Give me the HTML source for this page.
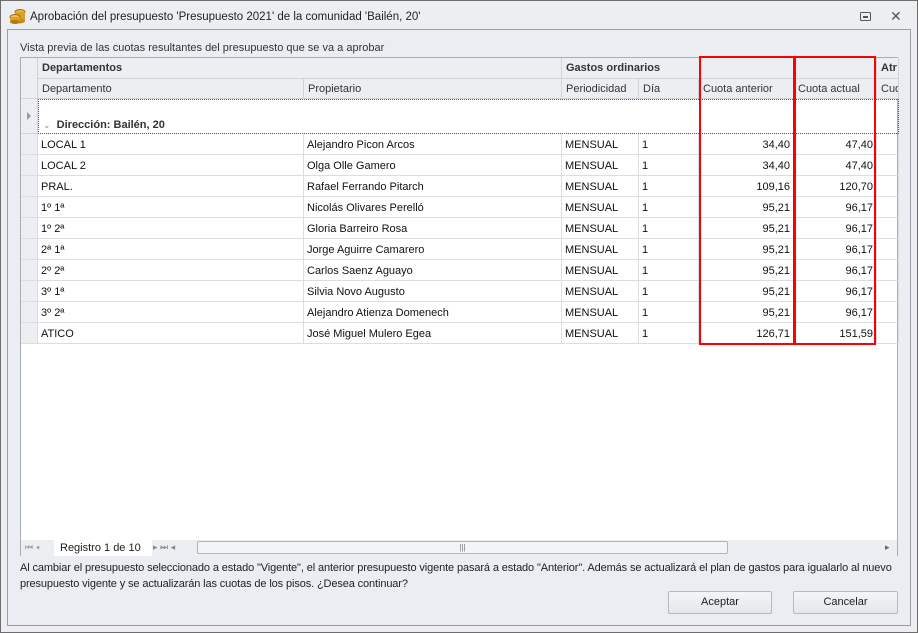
<!DOCTYPE html>
<html><head><style>
*{box-sizing:border-box;margin:0;padding:0}
body{width:918px;height:633px;background:#eceef2;font-family:"Liberation Sans",sans-serif;font-size:11px;color:#1e1e1e;position:relative;overflow:hidden}
.win{position:absolute;left:0;top:0;width:918px;height:633px;border:1px solid #6d6d6d}
.abs{position:absolute}
.panel{position:absolute;left:7px;top:29px;width:904px;height:597px;border:1px solid #9a9da3;background:#eaedf1}
.grid{position:absolute;left:20px;top:57px;width:878px;height:499px;background:#fff;border:1px solid #a9adb3}
.h{position:absolute;background:#eceef1;border-right:1px solid #d0d3d8;border-bottom:1px solid #d0d3d8;padding:4px 4px;white-space:nowrap;overflow:hidden;color:#333}
.c{position:absolute;border-right:1px solid #dcdde0;border-bottom:1px solid #dcdde0;padding:5px 3px 3px;white-space:nowrap;overflow:hidden;height:21px;color:#111}
.r{text-align:right}
.red{position:absolute;border:2px solid #f00}
.btn{position:absolute;top:591px;height:23px;border:1px solid #b6b9be;background:linear-gradient(#f4f5f7,#e4e6ea);text-align:center;line-height:21px;border-radius:2px}
</style></head><body>
<div class="win"></div>
<svg class="abs" style="left:9px;top:8px" width="18" height="16"><ellipse cx="11" cy="4" rx="5" ry="2.5" fill="#e9b53a" stroke="#9a6a10"/><rect x="6" y="4" width="10" height="9" fill="#d9a12b"/><ellipse cx="11" cy="13" rx="5" ry="2.5" fill="#c58c1a"/><ellipse cx="6" cy="9" rx="5" ry="2.5" fill="#f0c24a" stroke="#9a6a10"/><rect x="1" y="9" width="10" height="5" fill="#d9a12b"/><ellipse cx="6" cy="14" rx="5" ry="2" fill="#b07a12"/></svg>
<div class="abs" style="left:30px;top:11px;font-size:11.5px;color:#222">Aprobación del presupuesto 'Presupuesto 2021' de la comunidad 'Bailén, 20'</div>
<svg class="abs" style="left:860px;top:12px" width="12" height="10"><rect x="0.5" y="0.5" width="10" height="8" fill="none" stroke="#555" rx="1"/><rect x="3" y="4" width="5" height="2" fill="#555"/></svg>
<div class="abs" style="left:890px;top:8px;font-size:14px;color:#555">✕</div>
<div class="panel"></div>
<div class="abs" style="left:20px;top:42px;color:#333">Vista previa de las cuotas resultantes del presupuesto que se va a aprobar</div>
<div class="grid">
<div class="h" style="left:0;top:0;width:17px;height:41px"></div>
<div class="h" style="left:17px;top:0;width:524px;height:21px;font-weight:bold">Departamentos</div>
<div class="h" style="left:541px;top:0;width:315px;height:21px;font-weight:bold">Gastos ordinarios</div>
<div class="h" style="left:856px;top:0;width:22px;height:21px;font-weight:bold">Atr</div>
<div class="h" style="left:17px;top:21px;width:266px;height:20px">Departamento</div>
<div class="h" style="left:283px;top:21px;width:258px;height:20px">Propietario</div>
<div class="h" style="left:541px;top:21px;width:77px;height:20px">Periodicidad</div>
<div class="h" style="left:618px;top:21px;width:60px;height:20px">Día</div>
<div class="h" style="left:678px;top:21px;width:95px;height:20px">Cuota anterior</div>
<div class="h" style="left:773px;top:21px;width:83px;height:20px">Cuota actual</div>
<div class="h" style="left:856px;top:21px;width:22px;height:20px">Cuo</div>
<div class="h" style="left:0;top:41px;width:17px;height:35px"></div>
<div class="abs" style="left:6px;top:54px;border-left:4px solid #999;border-top:4px solid transparent;border-bottom:4px solid transparent"></div>
<div class="abs" style="left:17px;top:41px;width:861px;height:35px;border:1px dotted #555;border-bottom:1px dotted #555"></div>
<div class="abs" style="left:22px;top:61px;font-weight:bold;color:#333"><span style="color:#888;font-weight:normal;font-size:9px">⌄</span>&nbsp; Dirección: Bailén, 20</div>
<div id="rows"></div>
<div class="abs" style="left:0;top:482px;width:876px;height:16px;background:#eceef1"></div>
<div class="abs" style="left:4px;top:484px;color:#999;font-size:9px">⏮ ◂</div>
<div class="abs" style="left:33px;top:482px;width:98px;height:16px;background:#fff"></div>
<div class="abs" style="left:39px;top:484px;font-size:11px">Registro 1 de 10</div>
<div class="abs" style="left:132px;top:484px;color:#888;font-size:9px">▸ ⏭ ◂</div>
<div class="abs" style="left:176px;top:483px;width:531px;height:13px;border:1px solid #b0b3b8;border-radius:2px;background:#f3f4f6;text-align:center;font-size:8px;color:#777;line-height:11px">|||</div>
<div class="abs" style="left:864px;top:484px;color:#666;font-size:9px">▸</div>
</div>
<div class="red" style="left:699px;top:56px;width:96px;height:289px"></div>
<div class="red" style="left:794px;top:56px;width:82px;height:289px"></div>
<div class="abs" style="left:20px;top:560px;width:898px;line-height:16px;color:#222;font-size:11px;letter-spacing:-0.12px;white-space:nowrap">Al cambiar el presupuesto seleccionado a estado "Vigente", el anterior presupuesto vigente pasará a estado "Anterior". Además se actualizará el plan de gastos para igualarlo al nuevo<br>presupuesto vigente y se actualizarán las cuotas de los pisos. ¿Desea continuar?</div>
<div class="btn" style="left:668px;width:104px">Aceptar</div>
<div class="btn" style="left:793px;width:105px">Cancelar</div>
<script>
var d=[["LOCAL 1","Alejandro Picon Arcos","34,40","47,40"],["LOCAL 2","Olga Olle Gamero","34,40","47,40"],["PRAL.","Rafael Ferrando Pitarch","109,16","120,70"],["1º 1ª","Nicolás Olivares Perelló","95,21","96,17"],["1º 2ª","Gloria Barreiro Rosa","95,21","96,17"],["2ª 1ª","Jorge Aguirre Camarero","95,21","96,17"],["2º 2ª","Carlos Saenz Aguayo","95,21","96,17"],["3º 1ª","Silvia Novo Augusto","95,21","96,17"],["3º 2ª","Alejandro Atienza Domenech","95,21","96,17"],["ATICO","José Miguel Mulero Egea","126,71","151,59"]];
var h="";d.forEach(function(r,i){var t=76+i*21;
h+='<div class="c" style="left:0;top:'+t+'px;width:17px;background:#eceef1"></div>';
h+='<div class="c" style="left:17px;top:'+t+'px;width:266px">'+r[0]+'</div>';
h+='<div class="c" style="left:283px;top:'+t+'px;width:258px">'+r[1]+'</div>';
h+='<div class="c" style="left:541px;top:'+t+'px;width:77px">MENSUAL</div>';
h+='<div class="c" style="left:618px;top:'+t+'px;width:60px">1</div>';
h+='<div class="c r" style="left:678px;top:'+t+'px;width:95px">'+r[2]+'</div>';
h+='<div class="c r" style="left:773px;top:'+t+'px;width:83px">'+r[3]+'</div>';
h+='<div class="c" style="left:856px;top:'+t+'px;width:22px"></div>';});
document.getElementById("rows").outerHTML=h;
</script>
</body></html>
